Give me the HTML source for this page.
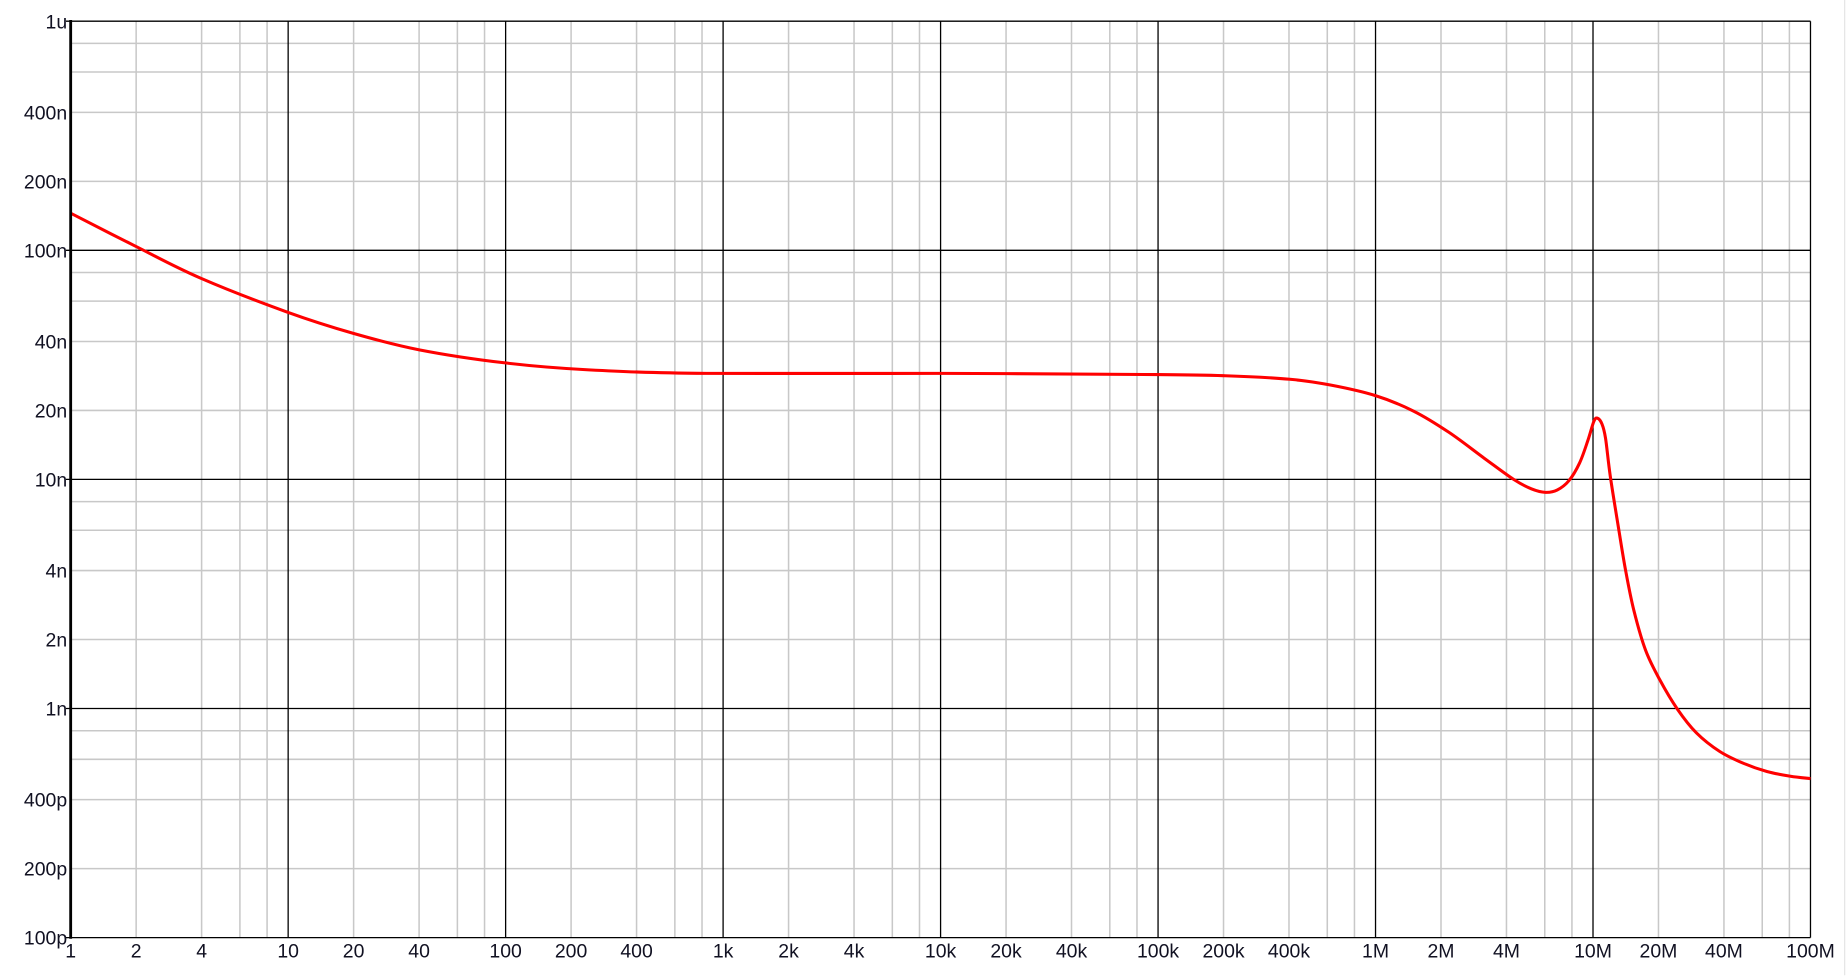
<!DOCTYPE html>
<html><head><meta charset="utf-8"><style>
html,body{margin:0;padding:0;background:#fff;overflow:hidden}
svg{display:block}
text{font-family:"Liberation Sans",Arial,sans-serif;font-size:16.5px;fill:#111122}
</style></head><body>
<svg id="s" width="1847" height="976" viewBox="0 0 1568 828.6" preserveAspectRatio="none" xmlns="http://www.w3.org/2000/svg">
<rect width="1568" height="828.6" fill="#fff"/>
<g id="minor" stroke="#c8c8c8" stroke-width="1.3"></g>
<g id="major" stroke="#000" stroke-width="1.1"></g>
<g id="lbl"></g>
<path id="curve" fill="none" stroke="#ff0000" stroke-width="2.6" stroke-linejoin="round"/>
<line x1="60" y1="17" x2="60" y2="797" stroke="#000" stroke-width="2.4"/>
<line x1="1566" y1="0" x2="1566" y2="828" stroke="#e4e4e4" stroke-width="1"/>
</svg>
<script>
var L=60,R=1537,T=18,B=796,dx=(R-L)/8,dy=(B-T)/4,ns="http://www.w3.org/2000/svg";
function el(p,n,a,t){var e=document.createElementNS(ns,n);for(var k in a)e.setAttribute(k,a[k]);if(t)e.textContent=t;document.getElementById(p).appendChild(e);}
for(var d=0;d<8;d++)[2,4,6,8].forEach(function(m){var x=L+dx*(d+Math.log10(m));el('minor','line',{x1:x,y1:T,x2:x,y2:B});});
for(var d=0;d<4;d++)[2,4,6,8].forEach(function(m){var y=T+dy*(d+1-Math.log10(m));el('minor','line',{x1:L,y1:y,x2:R,y2:y});});
for(var d=0;d<=8;d++){var x=L+dx*d;el('major','line',{x1:x,y1:T,x2:x,y2:B});}
for(var d=0;d<=4;d++){var y=T+dy*d;el('major','line',{x1:L-4,y1:y,x2:R,y2:y});}
var pre=['','k','M'];
for(var d=0;d<=8;d++){var u=pre[Math.floor(d/3)],b=Math.pow(10,d%3);
 el('lbl','text',{x:L+dx*d,y:813,'text-anchor':'middle'},b+u);
 if(d<8){el('lbl','text',{x:L+dx*(d+Math.log10(2)),y:813,'text-anchor':'middle'},(2*b)+u);
 el('lbl','text',{x:L+dx*(d+Math.log10(4)),y:813,'text-anchor':'middle'},(4*b)+u);}}
var yl=['1u','100n','10n','1n','100p'];
for(var d=0;d<=4;d++){el('lbl','text',{x:57,y:T+dy*d+6,'text-anchor':'end'},yl[d]);
 if(d<4){var sfx=['n','n','n','p'][d],base=[100,10,1,100][d];
 el('lbl','text',{x:57,y:T+dy*(d+1-Math.log10(4))+6,'text-anchor':'end'},(4*base)+sfx);
 el('lbl','text',{x:57,y:T+dy*(d+1-Math.log10(2))+6,'text-anchor':'end'},(2*base)+sfx);}}
var p=[[60,181],[115,209],[170,236],[244,265],[300,283],[356,297],[428,308],[500,314],[600,317],[800,317],[982,318],[1040,319],[1095,322],[1130,327],[1168,336],[1200,349],[1230,367],[1260,389],[1285,407],[1300,415],[1312,418],[1322,416],[1332,408],[1341,393],[1348,374],[1353,358],[1356,355],[1360,360],[1363,372],[1367,404],[1374,448],[1380,484],[1387,518],[1397,552],[1409,577],[1424,602],[1440,622],[1460,638],[1480,648],[1500,655],[1520,659],[1537,661]];
var s='M'+p[0][0]+','+p[0][1];
for(var i=0;i<p.length-1;i++){var p0=p[Math.max(0,i-1)],p1=p[i],p2=p[i+1],p3=p[Math.min(p.length-1,i+2)];
 s+=' C'+(p1[0]+(p2[0]-p0[0])/6)+','+(p1[1]+(p2[1]-p0[1])/6)+' '+(p2[0]-(p3[0]-p1[0])/6)+','+(p2[1]-(p3[1]-p1[1])/6)+' '+p2[0]+','+p2[1];}
document.getElementById('curve').setAttribute('d',s);
</script>
</body></html>
